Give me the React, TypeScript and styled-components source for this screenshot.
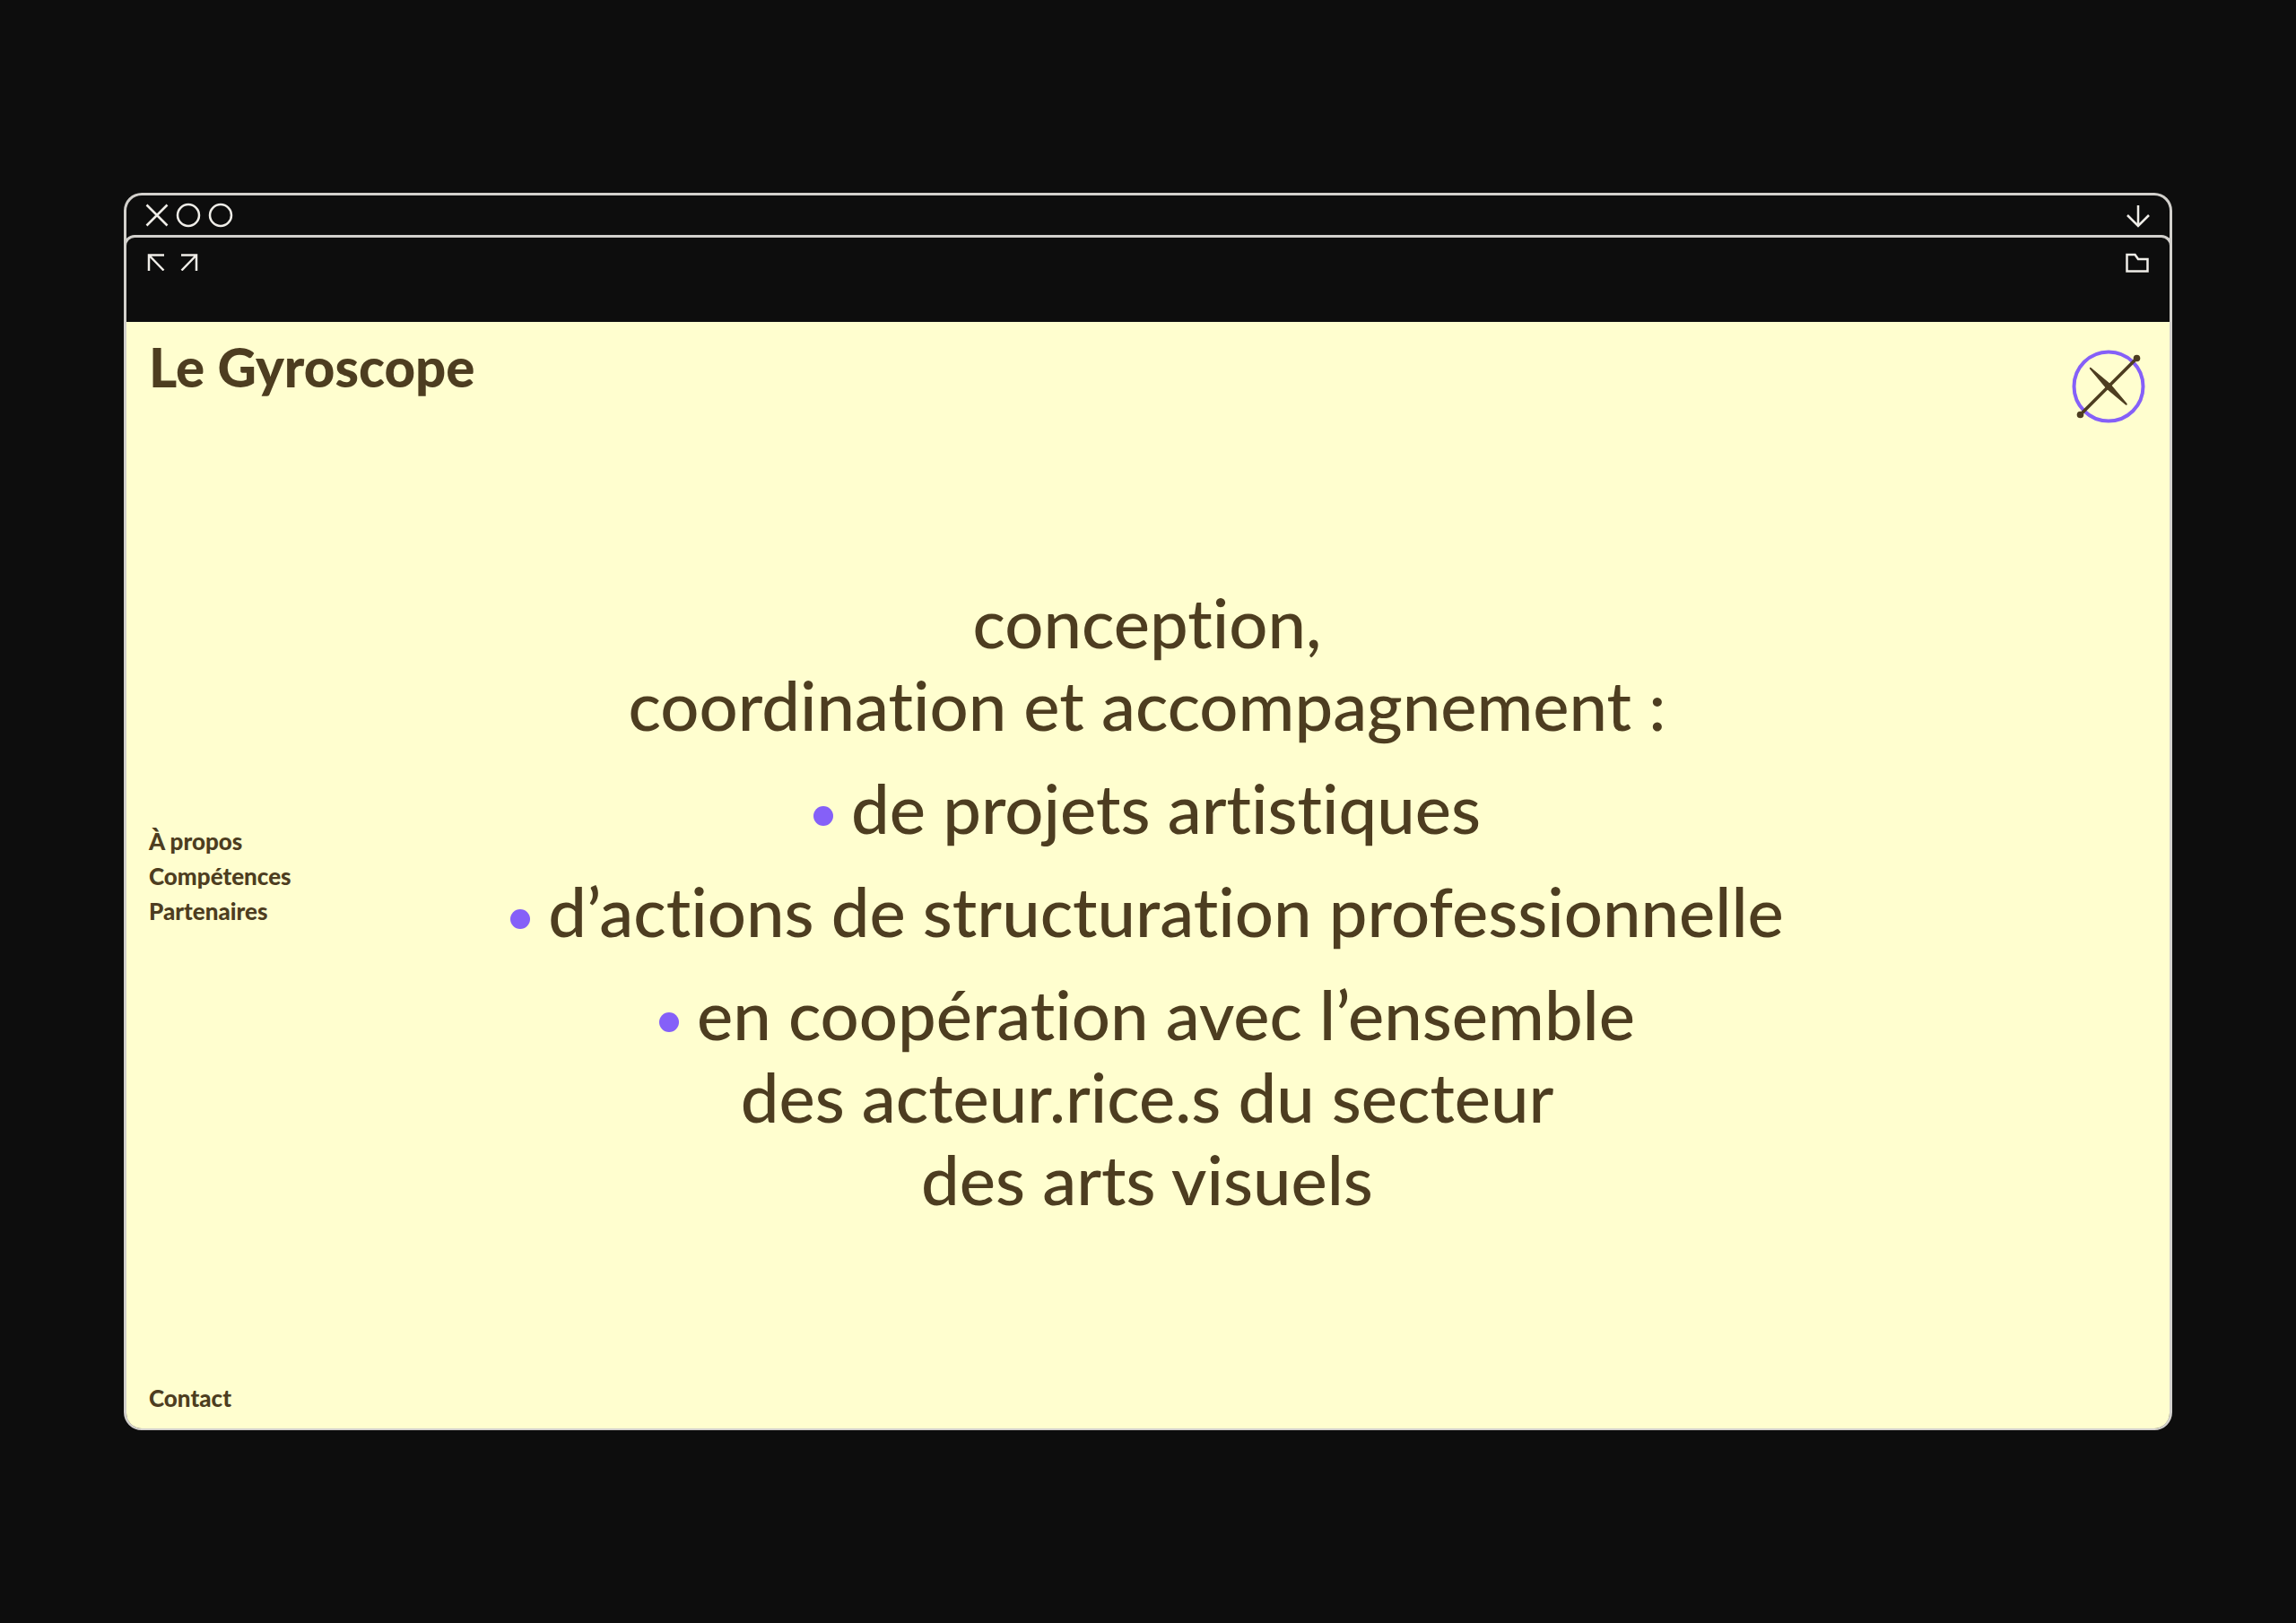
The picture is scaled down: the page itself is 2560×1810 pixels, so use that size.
import React from "react";
import styled, { createGlobalStyle, ThemeProvider } from "styled-components";

const theme = {
  line: "#d2d0cc",
  icon: "#efede8",
  cream: "#fffecf",
  brown: "#4d3d20",
  violet: "#8560f8",
};

const GlobalStyle = createGlobalStyle`
  *, *::before, *::after { box-sizing: border-box; }
  body {
    margin: 0;
    background: #0d0d0d;
    font-family: Lato, "Open Sans", sans-serif;
    font-variant-ligatures: none;
  }
`;

const Stage = styled.div`
  display: grid;
  min-height: 100vh;
  padding: 215px 138px;
`;

const BrowserWindow = styled.section`
  display: flex;
  flex-direction: column;
  border: 3px solid ${(p) => p.theme.line};
  border-bottom-width: 2px;
  border-radius: 20px;
`;

const Bar = styled.div`
  display: flex;
  justify-content: space-between;
  align-items: flex-start;
`;

const TitleBar = styled(Bar)`
  height: 44px;
  padding: 8px 22px 0 21px;
`;

const ToolBar = styled(Bar)`
  height: 97px;
  margin: 0 -3px;
  padding: 17px 23px 0;
  border: 3px solid ${(p) => p.theme.line};
  border-bottom: 0;
  border-radius: 12px 12px 0 0;
`;

const Controls = styled.div<{ $gap: number }>`
  display: flex;
  gap: ${(p) => p.$gap}px;
`;

const IconButton = styled.button`
  display: block;
  padding: 0;
  border: 0;
  background: none;
  color: ${(p) => p.theme.icon};
  cursor: pointer;

  svg {
    display: block;
    fill: none;
    stroke: currentColor;
    stroke-width: 2.5;
  }
`;

const Page = styled.div`
  flex: 1;
  display: grid;
  grid-template-rows: 1fr auto 1fr;
  padding: 16px 27px 14px 25px;
  border-radius: 0 0 17px 17px;
  background: ${(p) => p.theme.cream};
  color: ${(p) => p.theme.brown};
`;

const Header = styled.header`
  display: flex;
  justify-content: space-between;
  align-items: flex-start;
`;

const Brand = styled.h1`
  margin: 0;
  font-size: 60px;
  line-height: 68px;
  font-weight: 900;
`;

const GyroButton = styled(IconButton)`
  margin-top: 15px;
`;

const Middle = styled.main`
  display: grid;
  grid-template-columns: 1fr auto 1fr;
  align-items: center;
`;

const Menu = styled.nav`
  display: flex;
  flex-direction: column;
  align-items: flex-start;
`;

const MenuLink = styled.a`
  color: inherit;
  font-size: 26px;
  line-height: 39px;
  font-weight: 900;
  text-decoration: none;
`;

const Statement = styled.div`
  padding-top: 54px;
  font-size: 76px;
  line-height: 92px;
  font-weight: 500;
  text-align: center;
`;

const Lead = styled.p`
  margin: 0 0 23px;
`;

const Goals = styled.ul`
  display: grid;
  gap: 23px;
  margin: 0;
  padding: 0;
  list-style: none;
`;

const Goal = styled.li`
  &::before {
    content: "";
    display: inline-block;
    width: 22px;
    height: 22px;
    margin-right: 20px;
    border-radius: 50%;
    background: ${(p) => p.theme.violet};
    vertical-align: middle;
  }
`;

const Footer = styled.footer`
  display: flex;
  align-items: flex-end;
`;

const menu = [
  { href: "#a-propos", label: "À propos" },
  { href: "#competences", label: "Compétences" },
  { href: "#partenaires", label: "Partenaires" },
];

const Cross = () => (
  <svg width="26" height="28" viewBox="0 0 26 28">
    <path d="M1.5 2.5 L24.5 25.5 M24.5 2.5 L1.5 25.5" />
  </svg>
);

const Ring = () => (
  <svg width="28" height="28" viewBox="0 0 28 28">
    <circle cx="14" cy="14" r="12" />
  </svg>
);

const ArrowDown = () => (
  <svg width="26" height="28" viewBox="0 0 26 28">
    <path d="M13 3 V26 M1 14 L13 26 L25 14" />
  </svg>
);

const ArrowUpLeft = () => (
  <svg width="20" height="20" viewBox="0 0 20 20">
    <path d="M19 2.5 H2 V20 M2 2.5 L18.5 19.5" />
  </svg>
);

const ArrowUpRight = () => (
  <svg width="20" height="20" viewBox="0 0 20 20">
    <path d="M1 2.5 H18 V20 M18 2.5 L1.5 19.5" />
  </svg>
);

const Folder = () => (
  <svg width="26" height="22" viewBox="0 0 26 22">
    <path d="M1.5 2 H10.5 L14 7 H24.5 V20.5 H1.5 Z" />
  </svg>
);

const Gyroscope = () => (
  <svg width="82" height="82" viewBox="0 0 82 82">
    <circle cx="41" cy="41" r="38.5" stroke={theme.violet} strokeWidth="4" />
    <path d="M9.5 72.5 L72.5 9.5" stroke={theme.brown} strokeWidth="3.8" />
    <g fill={theme.brown} stroke="none">
      <circle cx="9.5" cy="72.5" r="3.8" />
      <circle cx="72.5" cy="9.5" r="3.8" />
      <path d="M20 20 Q21 19.5 22 20.5 L43.5 38.5 L61.500 60 Q62 61 61.5 61.5 Q61 62 60 61.5 L38.5 43.5 L20.5 22 Q19.5 21 20 20 Z" />
    </g>
  </svg>
);

export default function App() {
  return (
    <ThemeProvider theme={theme}>
      <GlobalStyle />
      <Stage>
        <BrowserWindow>
          <TitleBar>
            <Controls $gap={8}>
              <IconButton aria-label="Fermer"><Cross /></IconButton>
              <IconButton aria-label="Réduire"><Ring /></IconButton>
              <IconButton aria-label="Agrandir"><Ring /></IconButton>
            </Controls>
            <IconButton aria-label="Télécharger"><ArrowDown /></IconButton>
          </TitleBar>
          <ToolBar>
            <Controls $gap={17}>
              <IconButton aria-label="Précédent"><ArrowUpLeft /></IconButton>
              <IconButton aria-label="Suivant"><ArrowUpRight /></IconButton>
            </Controls>
            <IconButton aria-label="Dossier"><Folder /></IconButton>
          </ToolBar>
          <Page>
            <Header>
              <Brand>Le Gyroscope</Brand>
              <GyroButton aria-label="Menu"><Gyroscope /></GyroButton>
            </Header>
            <Middle>
              <Menu>
                {menu.map((item) => (
                  <MenuLink key={item.href} href={item.href}>{item.label}</MenuLink>
                ))}
              </Menu>
              <Statement>
                <Lead>
                  conception,
                  <br />
                  coordination et accompagnement :
                </Lead>
                <Goals>
                  <Goal>de projets artistiques</Goal>
                  <Goal>d’actions de structuration professionnelle</Goal>
                  <Goal>
                    en coopération avec l’ensemble
                    <br />
                    des acteur.rice.s du secteur
                    <br />
                    des arts visuels
                  </Goal>
                </Goals>
              </Statement>
            </Middle>
            <Footer>
              <MenuLink href="#contact">Contact</MenuLink>
            </Footer>
          </Page>
        </BrowserWindow>
      </Stage>
    </ThemeProvider>
  );
}
